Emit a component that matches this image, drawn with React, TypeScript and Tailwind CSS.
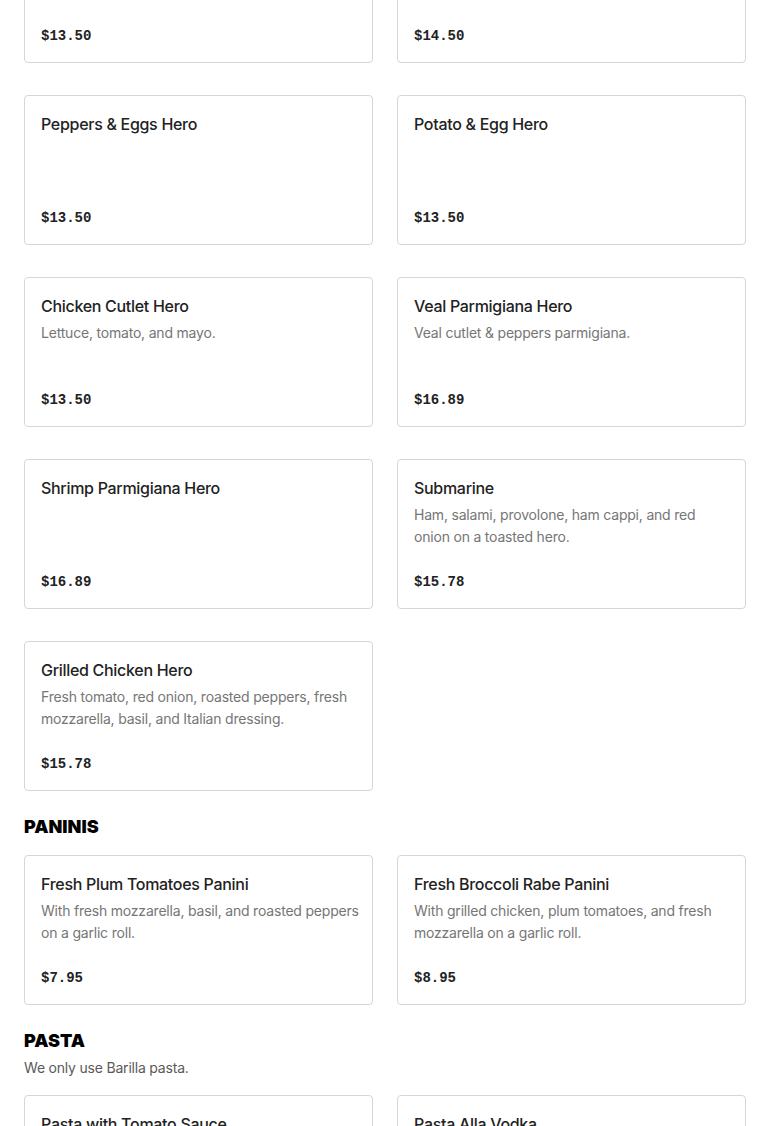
import React from "react";

type Item = { name: string; desc?: React.ReactNode; price: string };

const heroes: Item[] = [
  { name: "Eggplant Parmigiana Hero", price: "$13.50" },
  { name: "Sausage & Peppers Hero", price: "$14.50" },
  { name: "Peppers & Eggs Hero", price: "$13.50" },
  { name: "Potato & Egg Hero", price: "$13.50" },
  { name: "Chicken Cutlet Hero", desc: "Lettuce, tomato, and mayo.", price: "$13.50" },
  { name: "Veal Parmigiana Hero", desc: "Veal cutlet & peppers parmigiana.", price: "$16.89" },
  { name: "Shrimp Parmigiana Hero", price: "$16.89" },
  {
    name: "Submarine",
    desc: (
      <>
        Ham, salami, provolone, ham cappi, and red
        <br />
        onion on a toasted hero.
      </>
    ),
    price: "$15.78",
  },
  {
    name: "Grilled Chicken Hero",
    desc: "Fresh tomato, red onion, roasted peppers, fresh mozzarella, basil, and Italian dressing.",
    price: "$15.78",
  },
];

const paninis: Item[] = [
  {
    name: "Fresh Plum Tomatoes Panini",
    desc: "With fresh mozzarella, basil, and roasted peppers on a garlic roll.",
    price: "$7.95",
  },
  {
    name: "Fresh Broccoli Rabe Panini",
    desc: "With grilled chicken, plum tomatoes, and fresh mozzarella on a garlic roll.",
    price: "$8.95",
  },
];

const pasta: Item[] = [
  { name: "Pasta with Tomato Sauce", price: "$12.95" },
  { name: "Pasta Alla Vodka", price: "$14.95" },
];

function Card({ item }: { item: Item }) {
  return (
    <div className="flex h-[150px] flex-col rounded-[4px] border border-[#d6d6d6] bg-white pt-4 pr-2 pb-4 pl-4">
      <div className="text-[16px] leading-6 font-medium text-[#222222] [font-family:Inter,'Noto_Sans',sans-serif] tracking-[-0.3px]">
        {item.name}
      </div>
      {item.desc && (
        <div className="mt-1 text-[14px] leading-[22px] text-[#767676] [font-family:Inter,'Noto_Sans',sans-serif] tracking-[-0.2px]">
          {item.desc}
        </div>
      )}
      <div className="mt-auto text-[14px] leading-5 font-bold text-[#222222] [font-family:'Liberation_Mono',monospace]">
        {item.price}
      </div>
    </div>
  );
}

function Grid({ items }: { items: Item[] }) {
  return (
    <div className="grid grid-cols-2 gap-x-6 gap-y-8">
      {items.map((it) => (
        <Card key={it.name} item={it} />
      ))}
    </div>
  );
}

function Heading({ children }: { children: React.ReactNode }) {
  return (
    <h2 className="text-[18px] leading-6 font-black text-black [font-family:Inter,'Liberation_Sans',sans-serif]">
      {children}
    </h2>
  );
}

export default function App() {
  return (
    <div className="h-[1126px] overflow-hidden bg-white">
      <div className="-mt-[87px] px-6">
        <Grid items={heroes} />
        <div className="mt-6">
          <Heading>PANINIS</Heading>
          <div className="mt-4">
            <Grid items={paninis} />
          </div>
        </div>
        <div className="mt-6">
          <Heading>PASTA</Heading>
          <p className="mt-[5px] text-[14px] leading-5 text-[#5a5a5a] [font-family:Inter,'Noto_Sans',sans-serif] tracking-[-0.2px]">
            We only use Barilla pasta.
          </p>
          <div className="mt-[17px]">
            <Grid items={pasta} />
          </div>
        </div>
      </div>
    </div>
  );
}
